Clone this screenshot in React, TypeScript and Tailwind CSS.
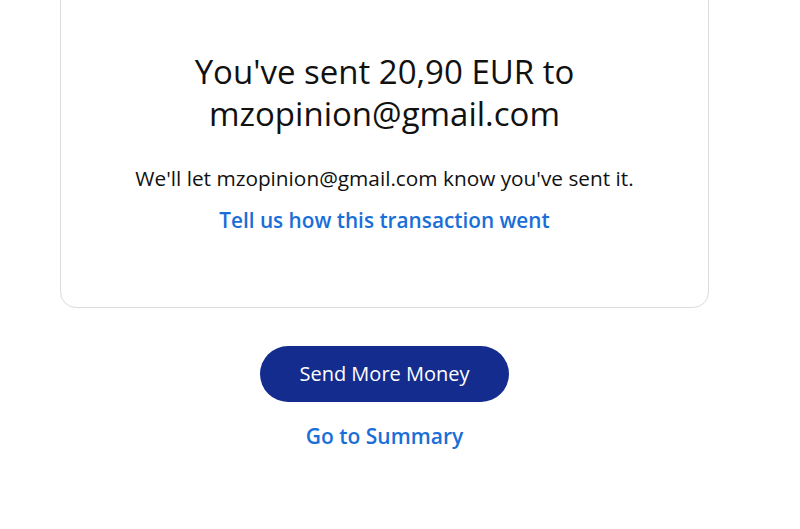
export default function App() {
    return (
        <div className="min-h-[529px] w-full bg-white font-['Open_Sans','Noto_Sans',sans-serif] text-[#000]">
            <div className="w-[769px] px-[60px] flex flex-col items-center">
                {/* Confirmation card */}
                <div className="w-full -mt-[24px] rounded-2xl border border-[#dcdcdc] flex flex-col items-center pt-[74px] pb-[74px]">
                    <h1 className="text-[33px] leading-[42px] text-center text-[#111]">
                        You've sent 20,90 EUR to
                        <br />
                        mzopinion@gmail.com
                    </h1>
                    <p className="mt-[30px] text-[20.8px] leading-[26px] text-[#111]">
                        We'll let mzopinion@gmail.com know you've sent it.
                    </p>
                    <a href="#" className="mt-[16px] text-[20.75px] leading-[26px] font-semibold text-[#1a6ed8]">
                        Tell us how this transaction went
                    </a>
                </div>

                <button className="mt-[38px] w-[249px] h-[56px] rounded-full bg-[#142c8e] text-white text-[20px]">
                    Send More Money
                </button>
                <a href="#" className="mt-[21px] text-[21px] leading-[26px] font-semibold text-[#1a6ed8]">
                    Go to Summary
                </a>
            </div>
        </div>
    );
}
